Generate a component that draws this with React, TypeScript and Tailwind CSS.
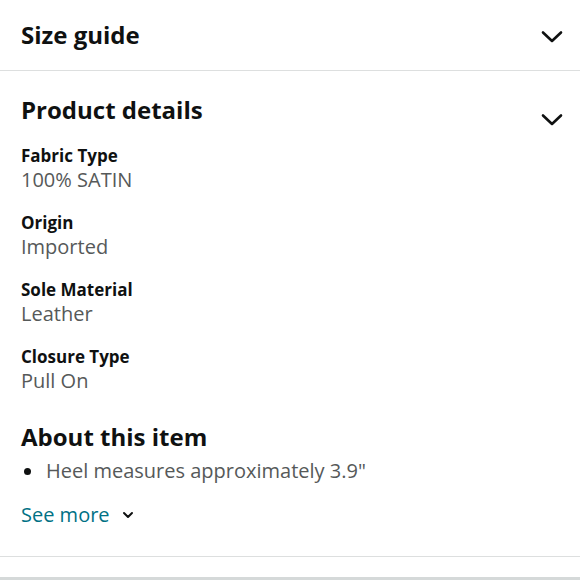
import React from 'react'

const FONT = { fontFamily: '"Open Sans", "Noto Sans", Arial, sans-serif' }

function Chevron({ small = false }: { small?: boolean }) {
  if (small) {
    return (
      <svg width="12" height="8" viewBox="0 0 12 8" fill="none">
        <polyline points="2,2 6,6 10,2" stroke="#0F1111" strokeWidth="2" strokeLinecap="round" strokeLinejoin="round" />
      </svg>
    )
  }
  return (
    <svg width="22" height="14" viewBox="0 0 22 14" fill="none">
      <polyline points="2,2.5 11,11 20,2.5" stroke="#0F1111" strokeWidth="2.6" strokeLinecap="round" strokeLinejoin="round" />
    </svg>
  )
}

const DETAILS = [
  { label: 'Fabric Type', value: '100% SATIN' },
  { label: 'Origin', value: 'Imported' },
  { label: 'Sole Material', value: 'Leather' },
  { label: 'Closure Type', value: 'Pull On' },
]

export default function App() {
  return (
    <div className="w-[580px] h-[580px] bg-white overflow-hidden text-[#0F1111]" style={FONT}>
      {/* Size guide */}
      <div className="h-[71px] px-[21px] pr-[17px] flex items-center justify-between border-b border-[#dddfdf]">
        <h2 className="text-[24px] leading-[30px] font-bold">Size guide</h2>
        <div className="pt-[4px]">
          <Chevron />
        </div>
      </div>

      {/* Product details */}
      <div className="px-[21px] pt-[24px] pb-[28px] border-b border-[#dddfdf]">
        <div className="flex items-start justify-between">
          <h2 className="text-[24px] leading-[30px] font-bold">Product details</h2>
          <div className="pt-[18px] mr-[-4px]">
            <Chevron />
          </div>
        </div>

        <div className="mt-[18px] flex flex-col gap-[19px]">
          {DETAILS.map((d) => (
            <div key={d.label}>
              <div className="text-[17px] leading-[22px] font-bold">{d.label}</div>
              <div className="text-[20px] leading-[26px] text-[#565959]">{d.value}</div>
            </div>
          ))}
        </div>

        <h2 className="mt-[28px] text-[24px] leading-[30px] font-bold">About this item</h2>
        <ul className="mt-[6px]">
          <li className="flex items-center text-[20px] leading-[26px] text-[#565959]">
            <span className="w-[7px] h-[7px] rounded-full bg-[#0F1111] ml-[3px] mr-[15px]" />
            Heel measures approximately 3.9"
          </li>
        </ul>
        <button className="mt-[18px] flex items-center gap-[12px] text-[20px] leading-[26px] text-[#007185]">
          See more
          <Chevron small />
        </button>
      </div>

      <div className="h-[20px]" />
      <div className="h-[10px] bg-[#d5d9d9]" />
    </div>
  )
}
